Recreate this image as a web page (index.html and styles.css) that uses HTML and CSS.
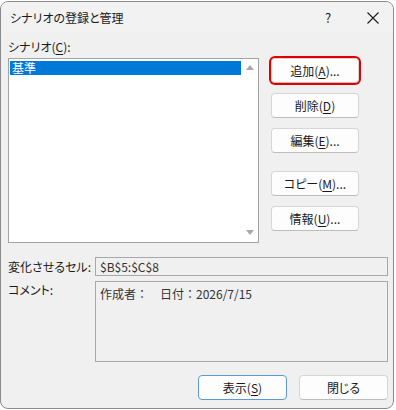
FILE: index.html
```html
<!DOCTYPE html>
<html lang="ja">
<head>
    <meta charset="UTF-8">
    <title>シナリオの登録と管理</title>
    <link rel="stylesheet" href="styles.css">
</head>
<body>
    <div class="dialog">
        <div class="titlebar">
            <span class="title">シナリオの登録と管理</span>
            <span class="help">?</span>
            <span class="close">
                <svg width="12" height="12" viewBox="0 0 12 12"><path d="M0.5 0.5 L11.5 11.5 M11.5 0.5 L0.5 11.5" stroke="#1a1a1a" stroke-width="1.1" fill="none"/></svg>
            </span>
        </div>

        <div class="content">
            <div class="caption">シナリオ(<u>C</u>):</div>

            <div class="main">
                <div class="listbox">
                    <div class="items">
                        <div class="item selected">基準</div>
                    </div>
                    <div class="scrollbar">
                        <span class="arrow up"></span>
                        <span class="arrow down"></span>
                    </div>
                </div>

                <!-- кнопки справа -->
                <div class="side">
                    <button class="btn focus">追加(<u>A</u>)...</button>
                    <button class="btn">削除(<u>D</u>)</button>
                    <button class="btn">編集(<u>E</u>)...</button>
                    <button class="btn spaced">コピー(<u>M</u>)...</button>
                    <button class="btn">情報(<u>U</u>)...</button>
                </div>
            </div>

            <div class="row">
                <div class="row-label">変化させるセル:</div>
                <div class="field">$B$5:$C$8</div>
            </div>

            <div class="row comment-row">
                <div class="row-label">コメント:</div>
                <div class="field comment">作成者：　日付：2026/7/15</div>
            </div>

            <div class="footer">
                <button class="btn wide default">表示(<u>S</u>)</button>
                <button class="btn wide">閉じる</button>
            </div>
        </div>
    </div>
</body>
</html>
```

FILE: styles.css
```css
body {
    margin: 0;
    background: #ffffff;
    font-family: "Noto Sans CJK JP", "Noto Sans", sans-serif;
    font-size: 12px;
    font-feature-settings: "palt";
    color: #1a1a1a;
}
.dialog {
    box-sizing: border-box;
    width: 394px;
    height: 408px;
    margin-top: 1px;
    border: 1px solid #8a8a8a;
    border-radius: 8px;
    background: #f0f0f0;
    overflow: hidden;
}
.titlebar {
    height: 31px;
    display: flex;
    align-items: center;
    padding-left: 9px;
    background: #f2f2f2;
}
.title {
    flex: 1;
    line-height: 16px;
}
.help {
    width: 14px;
    margin-right: 32px;
    font-size: 13px;
    text-align: center;
}
.close {
    display: flex;
    margin-right: 14px;
}
.content {
    padding: 0 5px 0 7px;
}
.caption {
    margin-top: 6px;
    line-height: 16px;
    height: 16px;
}
u {
    text-decoration-thickness: 1px;
    text-underline-offset: 2px;
}
.main {
    display: flex;
    margin-top: 3px;
}
.listbox {
    box-sizing: border-box;
    width: 251px;
    height: 185px;
    border: 1px solid #a3a3a3;
    background: #ffffff;
    display: flex;
}
.items {
    flex: 1;
    padding: 2px 0 0 1px;
}
.item {
    height: 14px;
    line-height: 14px;
    padding-left: 2px;
}
.item.selected {
    background: #0078d7;
    color: #ffffff;
}
.scrollbar {
    width: 17px;
    display: flex;
    flex-direction: column;
    justify-content: space-between;
    align-items: center;
    padding: 6px 0 7px;
}
.arrow {
    width: 0;
    height: 0;
    border-left: 4px solid transparent;
    border-right: 4px solid transparent;
}
.arrow.up {
    border-bottom: 5px solid #a8a8a8;
}
.arrow.down {
    border-top: 5px solid #a8a8a8;
}
.side {
    display: flex;
    flex-direction: column;
    gap: 10px;
    margin-left: 12px;
}
.btn {
    box-sizing: border-box;
    width: 88px;
    height: 25px;
    padding: 0;
    font-family: inherit;
    font-size: 12px;
    font-feature-settings: "palt";
    color: #1a1a1a;
    background: #fdfdfd;
    border: 1px solid #d6d6d6;
    border-bottom-color: #bdbdbd;
    border-radius: 4px;
}
.btn.focus {
    box-shadow: 0 0 0 2px #e00000;
}
.btn.spaced {
    margin-top: 8px;
}
.row {
    display: flex;
    margin-top: 14px;
}
.row-label {
    width: 87px;
    line-height: 19px;
}
.field {
    box-sizing: border-box;
    flex: 1;
    height: 19px;
    line-height: 17px;
    padding-left: 4px;
    border: 1px solid #a8a8a8;
    color: #333333;
}
.comment-row {
    margin-top: 5px;
}
.comment-row .row-label {
    line-height: 18px;
}
.field.comment {
    height: 81px;
    padding-top: 3px;
    font-feature-settings: normal;
}
.footer {
    display: flex;
    justify-content: flex-end;
    gap: 12px;
    margin-top: 13px;
}
.btn.wide {
    width: 89px;
}
.btn.default {
    border-color: #5a9ad8;
}
```
